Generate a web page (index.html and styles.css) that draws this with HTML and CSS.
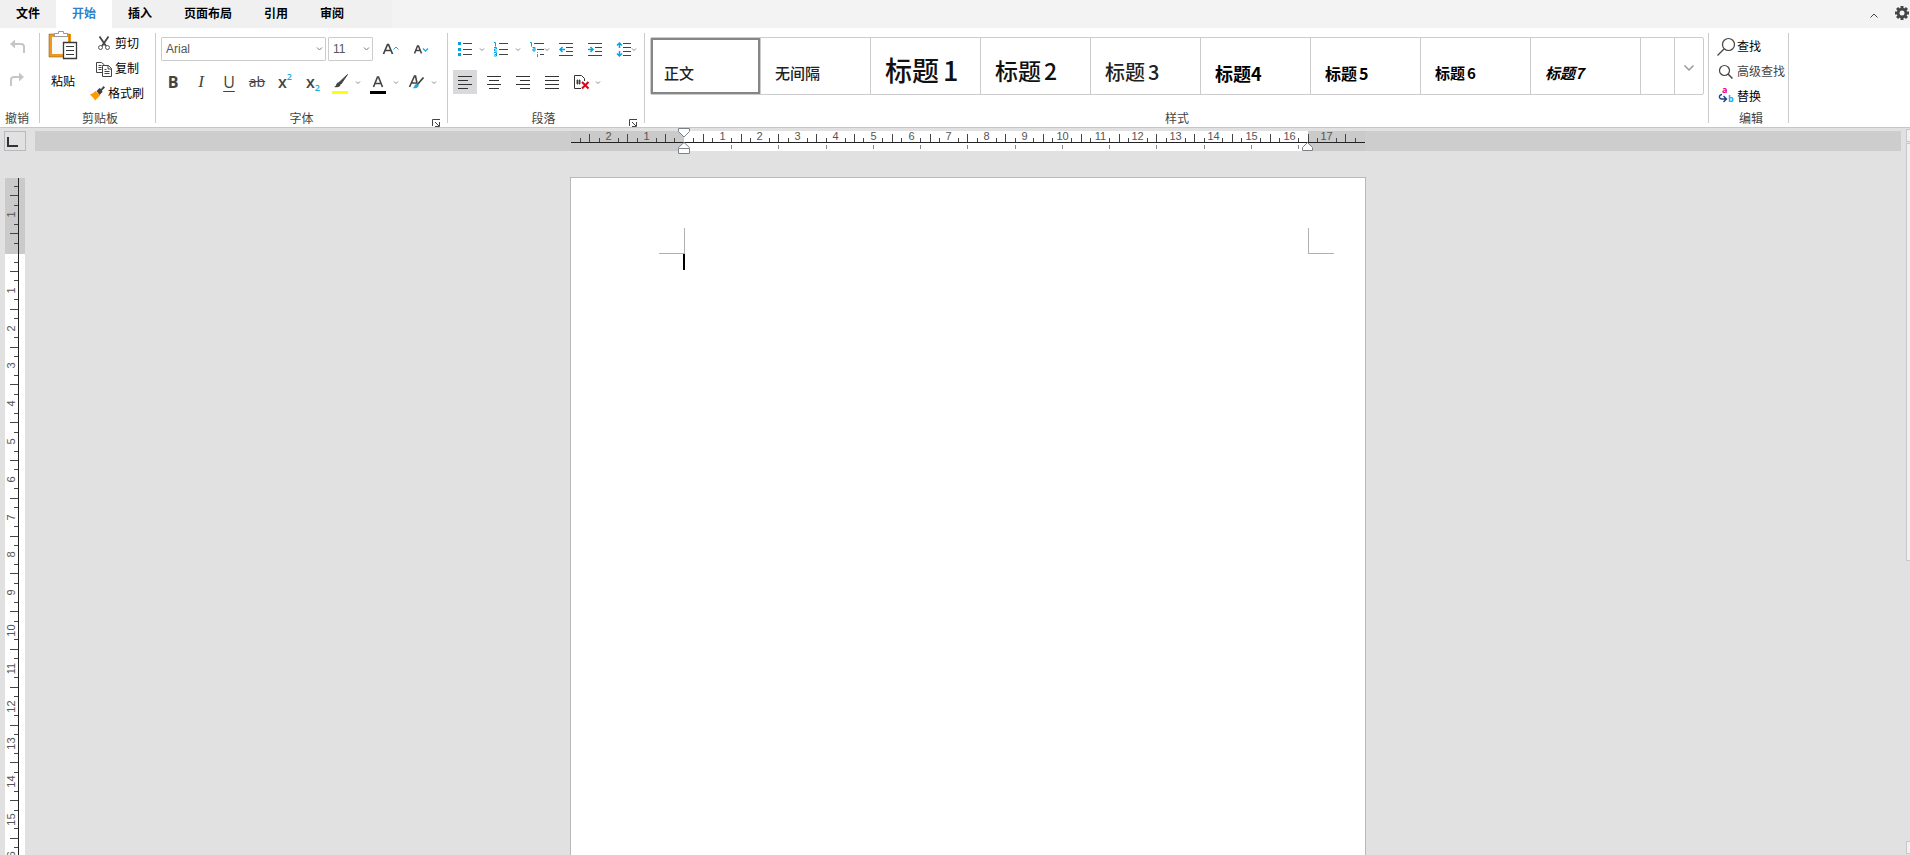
FILE: index.html
```html
<!DOCTYPE html>
<html lang="zh-CN">
<head>
<meta charset="utf-8">
<title>文档编辑器</title>
<link rel="stylesheet" href="styles.css">
</head>
<body>
<div class="app">
  <header class="topbar">
    <nav class="tabs">
      <button class="tab">文件</button>
      <button class="tab tab-active">开始</button>
      <button class="tab">插入</button>
      <button class="tab">页面布局</button>
      <button class="tab">引用</button>
      <button class="tab">审阅</button>
    </nav>
    <button class="top-btn" aria-label="折叠功能区"><svg width="24" height="24" viewBox="0 0 24 24"><path d="M8.500 15.500l3.500-3.500 3.500 3.500" fill="none" stroke="#444"/></svg></button>
    <button class="top-btn top-gear" aria-label="设置"><svg width="16" height="16" viewBox="0 0 16 16"><g fill="#444"><circle cx="8" cy="8" r="5.200"/><path d="M6.500 1h3v14h-3z"/><path d="M1 6.500h14v3H1z"/><path d="M6.500 1h3v14h-3z" transform="rotate(45 8 8)"/><path d="M6.500 1h3v14h-3z" transform="rotate(-45 8 8)"/></g><circle cx="8" cy="8" r="2.500" fill="#f3f3f3"/></svg></button>
  </header>

  <div class="ribbon">
    <section class="group group-undo">
      <div class="group-body undo-body">
        <button class="tool" aria-label="撤销"><svg width="24" height="24" viewBox="0 0 24 24"><path d="M9 8h7q3 0 3 3v6" fill="none" stroke="#c6c6c6" stroke-width="2"/><path d="M5 8l5-4.500v9z" fill="#c6c6c6"/></svg></button>
        <button class="tool" aria-label="重做"><svg width="24" height="24" viewBox="0 0 24 24"><path d="M15 8H9q-3 0-3 3v6" fill="none" stroke="#c6c6c6" stroke-width="2"/><path d="M19 8l-5-4.500v9z" fill="#c6c6c6"/></svg></button>
      </div>
      <div class="group-label">撤销</div>
    </section>
    <span class="sep"></span>

    <section class="group group-clip">
      <div class="group-body clip-body">
        <button class="paste">
          <svg width="30" height="32" viewBox="0 0 30 32"><path d="M2.500 5.500h19v20h-19z" fill="#fafafa" stroke="#f0981c" stroke-width="3"/><path d="M1 4h20.500v23H1z" fill="none" stroke="#8a6a3a" stroke-width=".6"/><path d="M6.500 6.500v-3h4V1.500h5v2h4v3z" fill="#fff" stroke="#999"/><path d="M15.500 12.500h13v16h-13z" fill="#fff" stroke="#3a3a3a" stroke-width="1.300"/><path d="M18 16.500h8M18 20.500h8M18 24.500h8" stroke="#3a3a3a"/></svg>
          <span>粘贴</span>
        </button>
        <div class="clip-list">
          <button class="row-btn"><svg width="16" height="16" viewBox="0 0 16 16"><path d="M3.500 .5l6.500 9.500M12.500 .5L6 10" stroke="#444" stroke-width="1.800" fill="none"/><circle cx="4.500" cy="11.500" r="2" fill="none" stroke="#555"/><circle cx="11.500" cy="11.500" r="2" fill="none" stroke="#555"/></svg><span>剪切</span></button>
          <button class="row-btn"><svg width="16" height="16" viewBox="0 0 16 16"><path d="M6 11.500H.500v-10h5l3 2.500" fill="none" stroke="#444"/><path d="M2.500 4.500h3M2.500 6.500h3M2.500 8.500h3" stroke="#444"/><path d="M6.500 4.500h6l3 3v8h-9z" fill="#fff" stroke="#444"/><path d="M12 4.500v3.500h3.500M8.500 8.500h2M8.500 10.500h5M8.500 12.500h5" stroke="#444" fill="none"/></svg><span>复制</span></button>
          <button class="row-btn row-wide"><svg width="16" height="16" viewBox="0 0 16 16"><path d="M6.500 5l3-3 1.500 1 2.500-3 1.500 1.500-3 3 .5 1.500-3 3z" fill="#444"/><path d="M0 8.500q3-.5 5.500-3.500l4.500 4.500-5 5q-1.500-3-5-6z" fill="#f90"/></svg><span>格式刷</span></button>
        </div>
      </div>
      <div class="group-label">剪贴板</div>
    </section>
    <span class="sep"></span>

    <section class="group group-font">
      <div class="group-body">
        <div class="row row-top">
          <label class="combo combo-font"><select aria-label="字体"><option>Arial</option></select><svg width="9" height="6" viewBox="0 0 9 6"><path d="M2 1.500L4.500 4 7 1.500" fill="none" stroke="#777"/></svg></label>
          <label class="combo combo-size"><select aria-label="字号"><option>11</option></select><svg width="9" height="6" viewBox="0 0 9 6"><path d="M2 1.500L4.500 4 7 1.500" fill="none" stroke="#777"/></svg></label>
          <button class="tool grow-btn" aria-label="增大字号"><svg width="24" height="24" viewBox="0 0 24 24"><path d="M4.500 17l4-9.500h1l4 9.500M6 13.500h6" fill="none" stroke="#444" stroke-width="1.700"/><path d="M14.500 12.500l2.500-2.500 2.500 2.500" fill="none" stroke="#16a9e8"/></svg></button>
          <button class="tool" aria-label="减小字号"><svg width="24" height="24" viewBox="0 0 24 24"><path d="M1.500 16.500l3-7.500h1l3 7.500M3 13.500h4.500" fill="none" stroke="#444" stroke-width="1.500"/><path d="M10 11.500L12.500 14l2.500-2.500" fill="none" stroke="#16a9e8" stroke-width="1.300"/></svg></button>
        </div>
        <div class="row row-font">
          <button class="tool glyph bold">B</button>
          <button class="tool glyph italic">I</button>
          <button class="tool glyph under">U</button>
          <button class="tool glyph strike">ab</button>
          <button class="tool glyph script">x<sup>2</sup></button>
          <button class="tool glyph script">x<sub>2</sub></button>
          <span class="split"><button class="tool" aria-label="突出显示"><svg width="24" height="24" viewBox="0 0 24 24"><path d="M18.500 4.500L12 14l-2-1.500z" fill="#444" stroke="#444"/><path d="M5 17q2-.5 2.500-3 1-2.500 3-1.500 2 1.500.5 3.500Q9 18 5 17z" fill="#444"/><path d="M3 21h16v3H3z" fill="#ff0"/></svg></button><button class="caret" aria-label="突出显示选项"><svg width="10" height="24" viewBox="0 0 10 24"><path d="M3 11.500L5 13.500 7 11.500" fill="none" stroke="#888"/></svg></button></span>
          <span class="split"><button class="tool" aria-label="字体颜色"><svg width="24" height="24" viewBox="0 0 24 24"><path d="M6.500 17L10.500 7h1l4 10M8 13.500h6" fill="none" stroke="#444" stroke-width="1.600"/><path d="M3 21h16v3H3z"/></svg></button><button class="caret" aria-label="字体颜色选项"><svg width="10" height="24" viewBox="0 0 10 24"><path d="M3 11.500L5 13.500 7 11.500" fill="none" stroke="#888"/></svg></button></span>
          <span class="split"><button class="tool" aria-label="字符底纹"><svg width="24" height="24" viewBox="0 0 24 24"><path d="M4.500 17L9.500 6h1l1.500 7M6.500 13h5.500" fill="none" stroke="#444" stroke-width="1.600"/><path d="M18.500 7.500L12 15" stroke="#444" stroke-width="1.800"/><path d="M7.500 18q2-.5 2-2.500 1-2 3-1 2 1 .5 2.500-2 2-5.500 1z" fill="#16a9e8"/></svg></button><button class="caret" aria-label="字符底纹选项"><svg width="10" height="24" viewBox="0 0 10 24"><path d="M3 11.500L5 13.500 7 11.500" fill="none" stroke="#888"/></svg></button></span>
        </div>
      </div>
      <div class="group-label">字体</div>
      <button class="launcher" aria-label="字体设置"><svg width="8" height="8" viewBox="0 0 8 8"><path d="M.500 7V.500H8M7.500 3v4.500H3M3 3l4 4" fill="none" stroke="#444"/></svg></button>
    </section>
    <span class="sep"></span>

    <section class="group group-para">
      <div class="group-body">
        <div class="row row-lists">
          <span class="split"><button class="tool" aria-label="项目符号"><svg width="24" height="24" viewBox="0 0 24 24"><path d="M5 5h3v3H5zM5 11h3v3H5zM5 16h3v3H5z" fill="#00a4e4"/><path d="M10 6.500h9M10 12.500h9M10 17.500h9" stroke="#444"/></svg></button><button class="caret" aria-label="项目符号选项"><svg width="10" height="24" viewBox="0 0 10 24"><path d="M3 11.500L5 13.500 7 11.500" fill="none" stroke="#888"/></svg></button></span>
          <span class="split"><button class="tool" aria-label="编号"><svg width="24" height="24" viewBox="0 0 24 24"><path d="M5 5.500h1.500v4M5 10.500h2.500v1.500H5.500v2H8M5 15.500h2.500v3.500H5M5.500 17.500h2" fill="none" stroke="#00a4e4"/><path d="M10 6.500h9M10 12.500h9M10 17.500h9" stroke="#444"/></svg></button><button class="caret" aria-label="编号选项"><svg width="10" height="24" viewBox="0 0 10 24"><path d="M3 11.500L5 13.500 7 11.500" fill="none" stroke="#888"/></svg></button></span>
          <button class="tool tool-wide" aria-label="多级列表"><svg width="27" height="24" viewBox="0 0 27 24"><path d="M5 5.500h1.500v4M7.500 10.500H10v3.500H8v-2h2M12.500 15v1M12.500 17v3" fill="none" stroke="#00a4e4"/><path d="M9 6.500h10M12 12.500h7M15 17.500h4" stroke="#444"/><path d="M20 11.500L22 13.500 24 11.500" fill="none" stroke="#888"/></svg></button>
          <button class="tool" aria-label="减少缩进"><svg width="24" height="24" viewBox="0 0 24 24"><path d="M5 6.500h14M12 10.500h7M12 14.500h7M5 18.500h14" stroke="#444"/><path d="M6 12.500h5M8.500 10L6 12.500 8.500 15" fill="none" stroke="#00a4e4" stroke-width="1.500"/></svg></button>
          <button class="tool tool-indent" aria-label="增加缩进"><svg width="24" height="24" viewBox="0 0 24 24"><path d="M5 6.500h14M12 10.500h7M12 14.500h7M5 18.500h14" stroke="#444"/><path d="M5 12.500h5M7.500 10l2.500 2.500L7.500 15" fill="none" stroke="#00a4e4" stroke-width="1.500"/></svg></button>
          <button class="tool tool-wide" aria-label="行距"><svg width="27" height="24" viewBox="0 0 27 24"><path d="M7.500 6v5M7.500 14v5M5 8.500L7.500 6 10 8.500M5 16.500L7.500 19l2.500-2.500" fill="none" stroke="#00a4e4" stroke-width="1.500"/><path d="M11 6.500h8M11 10.500h8M11 14.500h8M11 18.500h8" stroke="#444"/><path d="M20 11.500L22 13.500 24 11.500" fill="none" stroke="#888"/></svg></button>
        </div>
        <div class="row row-align">
          <button class="tool tool-on" aria-label="左对齐"><svg width="24" height="24" viewBox="0 0 24 24"><path d="M5 6.500h14M5 10.500h10M5 14.500h14M5 18.500h10" stroke="#333"/></svg></button>
          <button class="tool" aria-label="居中"><svg width="24" height="24" viewBox="0 0 24 24"><path d="M5 6.500h14M7 10.500h10M5 14.500h14M7 18.500h10" stroke="#333"/></svg></button>
          <button class="tool" aria-label="右对齐"><svg width="24" height="24" viewBox="0 0 24 24"><path d="M5 6.500h14M9 10.500h10M5 14.500h14M9 18.500h10" stroke="#333"/></svg></button>
          <button class="tool" aria-label="两端对齐"><svg width="24" height="24" viewBox="0 0 24 24"><path d="M5 6.500h14M5 10.500h14M5 14.500h14M5 18.500h14" stroke="#333"/></svg></button>
          <span class="split"><button class="tool" aria-label="清除格式"><svg width="24" height="24" viewBox="0 0 24 24"><path d="M12 18.500H5.500v-13h7l3 3V11" fill="none" stroke="#333"/><path d="M8.500 9.500v5M10.500 9.500v5M7 11h5M7 13h5" stroke="#333" stroke-width=".9"/><path d="M13 12l6.500 6.500M19.500 12L13 18.500" stroke="#e2001a" stroke-width="2"/></svg></button><button class="caret" aria-label="清除格式选项"><svg width="10" height="24" viewBox="0 0 10 24"><path d="M3 11.500L5 13.500 7 11.500" fill="none" stroke="#888"/></svg></button></span>
        </div>
      </div>
      <div class="group-label">段落</div>
      <button class="launcher" aria-label="段落设置"><svg width="8" height="8" viewBox="0 0 8 8"><path d="M.500 7V.500H8M7.500 3v4.500H3M3 3l4 4" fill="none" stroke="#444"/></svg></button>
    </section>
    <span class="sep"></span>

    <section class="group group-styles">
      <div class="group-body">
        <div class="gallery">
          <button class="style style-on">正文</button>
          <button class="style">无间隔</button>
          <button class="style h1">标题<span>1</span></button>
          <button class="style h2">标题<span>2</span></button>
          <button class="style h3">标题<span>3</span></button>
          <button class="style h4">标题4</button>
          <button class="style h5">标题<span>5</span></button>
          <button class="style h6">标题<span>6</span></button>
          <button class="style h7">标题7</button>
          <span class="style-rest"></span>
          <button class="gallery-more" aria-label="更多样式"><svg width="12" height="8" viewBox="0 0 12 8"><path d="M1.500 1.500L6 6l4.500-4.500" fill="none" stroke="#999" stroke-width="1.500"/></svg></button>
        </div>
      </div>
      <div class="group-label">样式</div>
    </section>
    <span class="sep"></span>

    <section class="group group-edit">
      <div class="group-body edit-body">
        <button class="row-btn"><svg width="20" height="20" viewBox="0 0 20 20"><circle cx="12.500" cy="7.500" r="6" fill="none" stroke="#444" stroke-width="1.200"/><path d="M8 12l-6.500 6.500" stroke="#444" stroke-width="1.200"/></svg><span>查找</span></button>
        <button class="row-btn soft"><svg width="20" height="20" viewBox="0 0 20 20"><circle cx="8.500" cy="8.500" r="5" fill="none" stroke="#444" stroke-width="1.200"/><path d="M12 12l4.500 4.500" stroke="#444" stroke-width="1.500"/></svg><span>高级查找</span></button>
        <button class="row-btn"><svg class="replace" width="20" height="20" viewBox="0 0 20 20"><text x="6" y="6" class="rep-a">a</text><text x="12" y="15" class="rep-b">b</text><path d="M6 7.500q-3 .5-2.500 3 .5 1.500 2.500 1.500h4M7.500 9l3 3-3 3" fill="none" stroke="#14418b" stroke-width="1.400"/></svg><span>替换</span></button>
      </div>
      <div class="group-label">编辑</div>
    </section>
    <span class="sep"></span>
  </div>

  <main class="workspace">
    <button class="tab-kind" aria-label="制表符"><svg width="22" height="20" viewBox="0 0 22 20"><path d="M4 6v9h10" fill="none" stroke="#333" stroke-width="2"/></svg></button>
    <div class="hruler"><svg id="hruler" width="794" height="20"></svg></div>
    <div class="vruler"><svg id="vruler" width="20" height="1123"></svg></div>
    <div class="stage">
      <article class="page"><div class="content"><span class="cursor"></span></div></article>
    </div>
    <div class="scroll">
      <span class="scroll-btn"></span>
      <span class="scroll-thumb"></span>
      <span class="scroll-space"></span>
      <span class="scroll-btn"></span>
    </div>
  </main>
</div>
<script src="rulers.js"></script>
</body>
</html>
```
FILE: styles.css
```css
*, *::before, *::after { box-sizing: border-box; }
body {
  margin: 0;
  overflow: hidden;
  font: 12px/16px "Liberation Sans", "Noto Sans CJK SC", sans-serif;
  color: #000;
}
button {
  margin: 0;
  padding: 0;
  border: 0;
  background: none;
  font: inherit;
  color: inherit;
}
svg { display: block; flex: none; }
.app { display: flex; flex-direction: column; height: 100vh; background: #e1e1e1; }

.topbar { display: flex; flex: none; height: 28px; background: #f3f3f3; align-items: center; }
.tabs { display: flex; width: 392px; height: 28px; background: #f0f0f0; margin-right: auto; }
.tab { padding: 0 16px; font-weight: 700; }
.tab-active { background: #fff; color: #2f7fc9; }
.top-btn { width: 24px; }
.top-gear { margin-left: 8px; width: 16px; margin-bottom: 2px; }

.ribbon { display: flex; flex: none; height: 100px; background: #fff; border-bottom: 1px solid #c6c6c6; }
.sep { flex: none; width: 1px; margin: 5px 0 4px; background: #ccc; }
.group { position: relative; display: flex; flex-direction: column; flex: none; }
.group-body { height: 84px; }
.group-label { height: 16px; text-align: center; color: #444; }
.launcher { position: absolute; right: 7px; bottom: 0; }
.tool { display: flex; align-items: center; justify-content: center; width: 24px; height: 24px; flex: none; }
.tool-on { background: #d9d9db; }
.tool-wide { width: 27px; }
.caret { width: 10px; height: 24px; }
.split { display: flex; }
.row { display: flex; height: 24px; }

.group-undo { width: 39px; }
.undo-body { display: flex; flex-direction: column; gap: 9px; padding: 8px 0 0 5px; }
.group-undo .group-label { padding-right: 5px; }
.group-clip { width: 115px; }
.group-clip .group-label, .group-edit .group-label { padding-left: 5px; }
.clip-body { display: flex; padding: 2px 0 0 8px; gap: 12px; }
.paste { display: flex; flex-direction: column; align-items: center; justify-content: flex-start; gap: 12px; width: 30px; white-space: nowrap; }
.clip-list { display: flex; flex-direction: column; gap: 9px; padding-top: 6px; align-items: flex-start; }
.row-btn { display: flex; align-items: center; gap: 3px; height: 16px; margin-left: 6px; white-space: nowrap; }
.row-wide { margin-left: 0; gap: 2px; }

.group-font { width: 291px; }
.group-font .group-body, .group-para .group-body { padding-left: 5px; }
.row-top { align-items: center; gap: 2px; margin: 9px 0; }
.combo { display: grid; align-items: center; height: 24px; }
.combo select, .combo svg { grid-area: 1 / 1; }
.combo svg { justify-self: end; margin-right: 2px; pointer-events: none; }
.combo select {
  appearance: none;
  width: 100%;
  height: 24px;
  padding: 0 4px;
  border: 1px solid #ccc;
  border-radius: 1px;
  background: #fff;
  font: inherit;
  color: #555;
}
.combo-font { width: 165px; }
.combo-size { width: 45px; }
.grow-btn { margin: 0 8px 0 4px; }
.row-font { gap: 4px; }
.glyph { font: 16px/24px "Open Sans", sans-serif; color: #444; }
.bold { font-weight: 700; }
.italic { font-family: "Liberation Serif", serif; font-style: italic; font-size: 17px; }
.under { text-decoration: underline; text-underline-offset: 3px; }
.strike { font-size: 14px; text-decoration: line-through; }
.script { font-weight: 600; }
.script sup, .script sub { font-size: 9px; line-height: 9px; color: #16a9e8; }
.script sup { align-self: flex-start; margin-top: 2px; }
.script sub { align-self: flex-end; margin-bottom: 2px; }

.group-para { width: 196px; }
.group-para .group-label { padding-right: 5px; }
.row-lists { margin: 9px 0; gap: 2px; }
.tool-indent { margin: 0 3px; }
.row-align { gap: 5px; }

.group-styles { padding: 0 4px 0 5px; }
.gallery { display: flex; margin-top: 9px; height: 58px; border: 1px solid #ccc; border-radius: 2px; }
.style {
  width: 110px;
  padding: 0 0 9px 14px;
  display: flex;
  align-items: flex-end;
  border-right: 1px solid #ccc;
  font: 500 15px/24px "Noto Sans CJK SC", sans-serif;
  color: #222;
  white-space: nowrap;
}
.style:first-child { padding-left: 13px; }
.style-on { box-shadow: inset 0 0 0 2px #868686; }
.h1, .h2 { padding-bottom: 12px; color: #111; }
.h1 { gap: 4px; font-size: 27px; }
.h2 { gap: 3px; font-size: 23px; }
.h3 { gap: 3px; font-size: 20px; padding-bottom: 10px; }
.h4, .h5, .h6, .h7 { font-weight: 700; color: #000; }
.h4 { font-size: 18px; }
.h5 { gap: 2px; font-size: 16px; }
.h6 { gap: 2px; }
.h7 { font-style: italic; }
.style-rest { width: 34px; border-right: 1px solid #ccc; }
.gallery-more { display: flex; align-items: center; justify-content: center; width: 28px; padding-top: 4px; }

.group-edit { width: 79px; }
.edit-body { display: flex; flex-direction: column; gap: 5px; padding: 9px 0 0 7px; align-items: flex-start; }
.edit-body .row-btn { margin: 0; height: 20px; gap: 1px; }
.soft { color: #444; }
.replace { overflow: visible; }
.rep-a, .rep-b { font: 700 9px "Open Sans", sans-serif; }
.rep-a { fill: #e6007e; }
.rep-b { fill: #16a9e8; }

.workspace { flex: 1; min-height: 0; display: grid; grid-template-columns: 35px 1fr 9px; grid-template-rows: 23px 1fr; overflow: hidden; }
.tab-kind { margin: 3px 0 0 4px; width: 22px; height: 20px; border: 1px solid #b6bac0; }
.tab-kind svg { margin: -1px; }
.hruler { margin-top: 3px; height: 20px; display: flex; justify-content: center; background: #cdcdcd; }
.hruler svg, .vruler svg { overflow: visible; }
.vruler { grid-area: 2 / 1; margin: 27px 0 0 5px; min-height: 0; }
.stage { grid-area: 2 / 2; min-height: 0; display: flex; justify-content: center; align-items: flex-start; padding-top: 26px; }
.page { flex: none; width: 796px; height: 1124px; padding: 76px 57px 76px 113px; border: 1px solid #b9b9b9; background: #fff; }
.content { position: relative; }
.content::before, .content::after {
  content: "";
  position: absolute;
  top: -26px;
  width: 26px;
  height: 26px;
  border: 0 solid #b0b0b0;
  border-bottom-width: 1px;
}
.content::before { left: -25px; border-right-width: 1px; }
.content::after { left: 100%; border-left-width: 1px; }
.cursor { display: block; width: 2px; height: 16px; margin-left: -1px; background: #000; }

.scroll { grid-area: 1 / 3 / 3 / 4; display: flex; flex-direction: column; gap: 1px; padding: 1px 0 1px 5px; }
.scroll span { width: 17px; border: 1px solid #c8c8c8; background: #f1f1f1; }
.scroll .scroll-btn { height: 13px; flex: none; }
.scroll .scroll-thumb { flex: 418; }
.scroll .scroll-space { flex: 279; border: 0; background: none; }

.tick { stroke: #444; }
.stop { stroke: #888; }
.num { font: 11px "Liberation Sans", sans-serif; fill: #555; text-anchor: middle; }
.marker { fill: #fff; stroke: #7c828a; }
```
FILE: rulers.js
```js
const NS = "http://www.w3.org/2000/svg";
const CM = 37.795;

function add(parent, name, attrs, text) {
  const node = document.createElementNS(NS, name);
  for (const key in attrs) node.setAttribute(key, attrs[key]);
  if (text !== undefined) node.textContent = text;
  parent.appendChild(node);
}

function drawHorizontal(svg) {
  const zero = 3 * CM, end = 19.5 * CM;
  add(svg, "rect", { x: 0, y: 0, width: 794, height: 20, fill: "#cacaca" });
  add(svg, "rect", { x: Math.round(zero), y: 0, width: Math.round(end - zero), height: 20, fill: "#fff" });
  for (let q = 1; q < 84; q++) {
    const x = Math.floor(q * CM / 4) + 0.5;
    const n = q / 4 - 3;
    if (q % 4 === 0) {
      if (n !== 0) add(svg, "text", { x: x, y: 9, class: "num" }, Math.abs(n));
    } else {
      add(svg, "line", { x1: x, x2: x, y1: q % 2 ? 7 : 3, y2: 11, class: "tick" });
    }
  }
  for (let x = zero + 1.25 * CM; x < end; x += 1.25 * CM) {
    const p = Math.floor(x) + 0.5;
    add(svg, "line", { x1: p, x2: p, y1: 14, y2: 18, class: "stop" });
  }
  add(svg, "line", { x1: 0, x2: 794, y1: 11.5, y2: 11.5, stroke: "#222" });
  add(svg, "path", { d: "M107.5-2.500h11v3L113 6l-5.500-5.500z", class: "marker" });
  add(svg, "path", { d: "M113 11.500l5.500 5v1h-11v-1z", class: "marker" });
  add(svg, "path", { d: "M107.500 17.500h11v5h-11z", class: "marker" });
  add(svg, "path", { d: "M736.500 11.500l5 5v3h-10v-3z", class: "marker" });
}

function drawVertical(svg) {
  const zero = 2 * CM;
  const visible = svg.parentNode.clientHeight;
  add(svg, "rect", { x: 0, y: 0, width: 20, height: 1123, fill: "#fff" });
  add(svg, "rect", { x: 0, y: 0, width: 20, height: Math.round(zero), fill: "#cacaca" });
  for (let q = 1; q * CM / 4 < visible + 8; q++) {
    const y = Math.floor(q * CM / 4) - 0.5;
    const n = q / 4 - 2;
    if (q % 4 === 0) {
      if (n !== 0) add(svg, "text", { transform: `translate(10 ${y}) rotate(-90)`, class: "num" }, Math.abs(n));
    } else {
      add(svg, "line", { x1: q % 2 ? 9 : 5, x2: 13, y1: y, y2: y, class: "tick" });
    }
  }
  add(svg, "line", { x1: 13.5, x2: 13.5, y1: 0, y2: 1123, stroke: "#222" });
}

drawHorizontal(document.getElementById("hruler"));
drawVertical(document.getElementById("vruler"));
```
